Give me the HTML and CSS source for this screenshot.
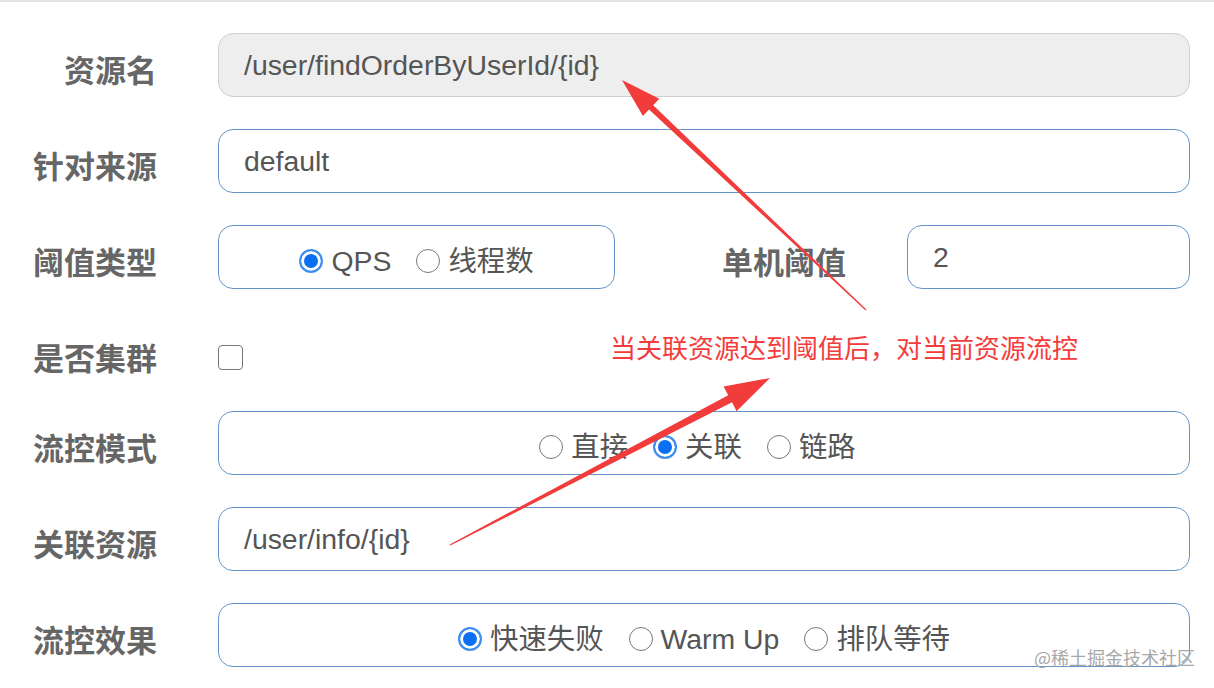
FILE: index.html
```html
<!DOCTYPE html>
<html lang="zh-CN">
<head>
<meta charset="utf-8">
<title>流控规则</title>
<link rel="stylesheet" href="styles.css">
</head>
<body>
<div class="page">
  <div class="topline"></div>
  <form class="form">
    <div class="row">
      <label class="lbl">资源名</label>
      <input class="input disabled" type="text" value="/user/findOrderByUserId/{id}" disabled>
    </div>
    <div class="row">
      <label class="lbl">针对来源</label>
      <input class="input" type="text" value="default">
    </div>
    <div class="row">
      <label class="lbl">阈值类型</label>
      <div class="group small">
        <label class="opt"><input type="radio" name="grade" checked>QPS</label>
        <label class="opt"><input type="radio" name="grade">线程数</label>
      </div>
      <label class="lbl wide">单机阈值</label>
      <input class="input" type="text" value="2">
    </div>
    <div class="row check">
      <label class="lbl">是否集群</label>
      <input class="checkbox" type="checkbox">
    </div>
    <div class="row">
      <label class="lbl">流控模式</label>
      <div class="group shift">
        <label class="opt"><input type="radio" name="mode">直接</label>
        <label class="opt"><input type="radio" name="mode" checked>关联</label>
        <label class="opt"><input type="radio" name="mode">链路</label>
      </div>
    </div>
    <div class="row">
      <label class="lbl">关联资源</label>
      <input class="input" type="text" value="/user/info/{id}">
    </div>
    <div class="row">
      <label class="lbl">流控效果</label>
      <div class="group">
        <label class="opt"><input type="radio" name="effect" checked>快速失败</label>
        <label class="opt"><input type="radio" name="effect">Warm Up</label>
        <label class="opt"><input type="radio" name="effect">排队等待</label>
      </div>
    </div>
  </form>

  <svg class="annot" width="1214" height="688" viewBox="0 0 1214 688" xmlns="http://www.w3.org/2000/svg">
    <polygon fill="#f23b3b" points="866.4,309.6 653.2,105.2 659.3,98.7 622,80 642.9,116.1 649.0,109.6 865.6,310.4"/>
    <polygon fill="#f23b3b" points="450.3,545.6 732.0,402.3 736.6,411.2 770,378 723.6,386.4 728.2,395.3 449.7,544.4"/>
  </svg>
  <p class="note">当关联资源达到阈值后，对当前资源流控</p>
  <span class="watermark">@稀土掘金技术社区</span>
</div>
</body>
</html>
```

FILE: styles.css
```css
html, body {
  margin: 0;
  padding: 0;
  background: #fff;
}

.page {
  position: relative;
  width: 1214px;
  height: 688px;
  overflow: hidden;
  background: #fff;
  font-family: "Liberation Sans", "Noto Sans CJK SC", sans-serif;
}

.topline {
  height: 2px;
  background: #e4e4e4;
}

.form {
  display: flex;
  flex-direction: column;
  gap: 32px;
  padding: 31px 24px 0 0;
  margin: 0;
}

.row {
  display: flex;
  align-items: center;
  height: 64px;
}

.row.check {
  height: 58px;
  padding-top: 14px;
  box-sizing: border-box;
}

.lbl {
  flex: none;
  width: 157px;
  margin-right: 61px;
  box-sizing: border-box;
  padding-top: 8px;
  text-align: right;
  font-family: "Noto Sans CJK SC", sans-serif;
  font-size: 31px;
  line-height: 40px;
  font-weight: bold;
  color: #666;
}

.row.check .lbl {
  padding-top: 0;
}

.lbl.wide {
  width: 231px;
}

.input {
  flex: 1;
  min-width: 0;
  height: 64px;
  box-sizing: border-box;
  margin: 0;
  padding: 0 0 0 25px;
  border: 1.5px solid #6594cc;
  border-radius: 15px;
  background: #fff;
  font-family: "Liberation Sans", "Noto Sans CJK SC", sans-serif;
  font-size: 28.4px;
  color: #555;
  outline: none;
}

.input.disabled {
  background: #eeeeee;
  border-color: #cfcfcf;
  color: #555;
  -webkit-text-fill-color: #555;
  opacity: 1;
}

.group {
  flex: 1;
  height: 64px;
  box-sizing: border-box;
  padding-top: 8px;
  display: flex;
  justify-content: center;
  align-items: center;
  gap: 25px;
  border: 1.5px solid #6594cc;
  border-radius: 15px;
}

.group.small {
  flex: none;
  width: 397px;
}

.group.shift {
  padding-right: 13px;
}

.opt {
  display: flex;
  align-items: center;
  gap: 8px;
  font-family: "Liberation Sans", "Noto Sans CJK SC", sans-serif;
  font-size: 28.4px;
  line-height: 40px;
  color: #555;
}

.opt input {
  appearance: none;
  -webkit-appearance: none;
  flex: none;
  width: 24px;
  height: 24px;
  margin: 0;
  box-sizing: border-box;
  border: 1.5px solid #777;
  border-radius: 50%;
  background: #fff;
}

.opt input:checked {
  border: 2px solid #3f8ef2;
  background: #0b6ff2;
  box-shadow: inset 0 0 0 3px #fff;
}

.checkbox {
  appearance: none;
  -webkit-appearance: none;
  flex: none;
  width: 25px;
  height: 25px;
  margin: 0;
  box-sizing: border-box;
  border: 1.5px solid #777;
  border-radius: 4px;
  background: #fff;
}

.annot {
  position: absolute;
  top: 0;
  left: 0;
  pointer-events: none;
}

.note {
  position: absolute;
  left: 610px;
  top: 331px;
  margin: 0;
  font-family: "Noto Sans CJK SC", sans-serif;
  font-size: 26px;
  line-height: 32px;
  color: #f43c3c;
  white-space: nowrap;
}

.watermark {
  position: absolute;
  right: 19px;
  top: 645px;
  font-family: "Noto Sans CJK SC", sans-serif;
  font-size: 18px;
  line-height: 24px;
  color: #a8a8a8;
  white-space: nowrap;
}
```
